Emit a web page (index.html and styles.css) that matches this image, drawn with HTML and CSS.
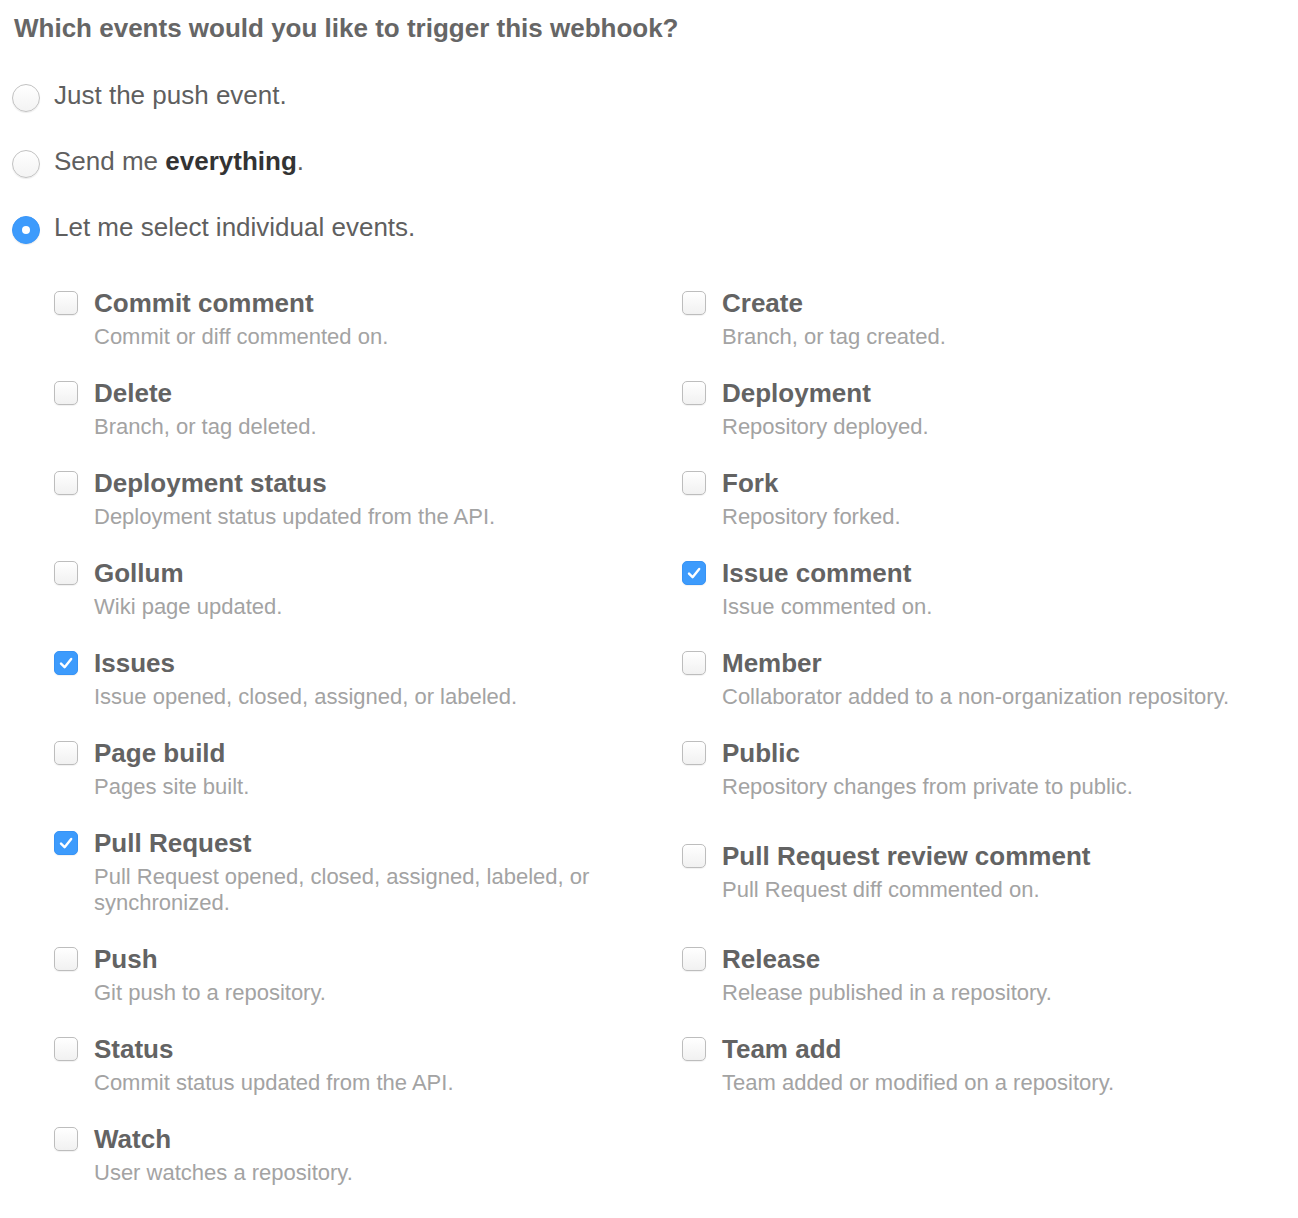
FILE: index.html
```html
<!DOCTYPE html>
<html lang="en">
<head>
<meta charset="utf-8">
<title>Webhook events</title>
<link rel="stylesheet" href="styles.css">
</head>
<body>
<form class="page">
  <h2 class="heading">Which events would you like to trigger this webhook?</h2>

  <div class="radio-list">
    <label class="radio-row"><span class="radio"></span><span class="radio-label">Just the push event.</span></label>
    <label class="radio-row"><span class="radio"></span><span class="radio-label">Send me <strong>everything</strong>.</span></label>
    <label class="radio-row"><span class="radio radio-on"><span class="radio-dot"></span></span><span class="radio-label">Let me select individual events.</span></label>
  </div>

  <div class="events">
    <label class="event"><span class="checkbox"></span><span class="event-text"><span class="event-title">Commit comment</span><span class="event-desc">Commit or diff commented on.</span></span></label>
    <label class="event"><span class="checkbox"></span><span class="event-text"><span class="event-title">Create</span><span class="event-desc">Branch, or tag created.</span></span></label>

    <label class="event"><span class="checkbox"></span><span class="event-text"><span class="event-title">Delete</span><span class="event-desc">Branch, or tag deleted.</span></span></label>
    <label class="event"><span class="checkbox"></span><span class="event-text"><span class="event-title">Deployment</span><span class="event-desc">Repository deployed.</span></span></label>

    <label class="event"><span class="checkbox"></span><span class="event-text"><span class="event-title">Deployment status</span><span class="event-desc">Deployment status updated from the API.</span></span></label>
    <label class="event"><span class="checkbox"></span><span class="event-text"><span class="event-title">Fork</span><span class="event-desc">Repository forked.</span></span></label>

    <label class="event"><span class="checkbox"></span><span class="event-text"><span class="event-title">Gollum</span><span class="event-desc">Wiki page updated.</span></span></label>
    <label class="event"><span class="checkbox checked"><svg viewBox="0 0 24 24" width="24" height="24"><path d="M7 12.6 L10.6 16.2 L17.2 8" /></svg></span><span class="event-text"><span class="event-title">Issue comment</span><span class="event-desc">Issue commented on.</span></span></label>

    <label class="event"><span class="checkbox checked"><svg viewBox="0 0 24 24" width="24" height="24"><path d="M7 12.6 L10.6 16.2 L17.2 8" /></svg></span><span class="event-text"><span class="event-title">Issues</span><span class="event-desc">Issue opened, closed, assigned, or labeled.</span></span></label>
    <label class="event"><span class="checkbox"></span><span class="event-text"><span class="event-title">Member</span><span class="event-desc">Collaborator added to a non-organization repository.</span></span></label>

    <label class="event"><span class="checkbox"></span><span class="event-text"><span class="event-title">Page build</span><span class="event-desc">Pages site built.</span></span></label>
    <label class="event"><span class="checkbox"></span><span class="event-text"><span class="event-title">Public</span><span class="event-desc">Repository changes from private to public.</span></span></label>

    <label class="event"><span class="checkbox checked"><svg viewBox="0 0 24 24" width="24" height="24"><path d="M7 12.6 L10.6 16.2 L17.2 8" /></svg></span><span class="event-text"><span class="event-title">Pull Request</span><span class="event-desc">Pull Request opened, closed, assigned, labeled, or synchronized.</span></span></label>
    <label class="event"><span class="checkbox"></span><span class="event-text"><span class="event-title">Pull Request review comment</span><span class="event-desc">Pull Request diff commented on.</span></span></label>

    <label class="event"><span class="checkbox"></span><span class="event-text"><span class="event-title">Push</span><span class="event-desc">Git push to a repository.</span></span></label>
    <label class="event"><span class="checkbox"></span><span class="event-text"><span class="event-title">Release</span><span class="event-desc">Release published in a repository.</span></span></label>

    <label class="event"><span class="checkbox"></span><span class="event-text"><span class="event-title">Status</span><span class="event-desc">Commit status updated from the API.</span></span></label>
    <label class="event"><span class="checkbox"></span><span class="event-text"><span class="event-title">Team add</span><span class="event-desc">Team added or modified on a repository.</span></span></label>

    <label class="event"><span class="checkbox"></span><span class="event-text"><span class="event-title">Watch</span><span class="event-desc">User watches a repository.</span></span></label>
  </div>
</form>
</body>
</html>
```

FILE: styles.css
```css
html, body {
  margin: 0;
  padding: 0;
  background: #ffffff;
}

body {
  font-family: "Liberation Sans", Arial, Helvetica, sans-serif;
  color: #666666;
}

.page {
  padding: 12px 12px 0 12px;
}

.heading {
  margin: 0 0 0 2px;
  font-size: 26px;
  line-height: 32px;
  font-weight: bold;
  color: #666666;
}

.radio-list {
  display: flex;
  flex-direction: column;
  gap: 34px;
  margin-top: 35px;
}

.radio-row {
  display: flex;
  align-items: center;
  gap: 14px;
  height: 32px;
}

.radio {
  box-sizing: border-box;
  width: 28px;
  height: 28px;
  border-radius: 50%;
  border: 1px solid #c2c2c2;
  background: linear-gradient(#ffffff, #f3f3f3);
  box-shadow: 0 1px 1px rgba(0, 0, 0, 0.08);
  display: flex;
  align-items: center;
  justify-content: center;
  flex: none;
  margin-top: 5px;
}

.radio-on {
  border-color: #3a97f9;
  background: #3d9bfc;
}

.radio-dot {
  width: 8px;
  height: 8px;
  border-radius: 50%;
  background: #ffffff;
}

.radio-label {
  font-size: 26px;
  line-height: 32px;
  color: #5f5f5f;
}

.radio-label strong {
  color: #333333;
  font-weight: bold;
}

.events {
  display: grid;
  grid-template-columns: 628px 628px;
  row-gap: 25px;
  align-items: center;
  margin: 42px 0 0 42px;
}

.event {
  display: flex;
  align-items: flex-start;
  gap: 16px;
}

.checkbox {
  box-sizing: border-box;
  flex: none;
  width: 24px;
  height: 24px;
  margin-top: 6px;
  border-radius: 5px;
  border: 1px solid #bdbdbd;
  background: linear-gradient(#ffffff, #f1f1f1);
  box-shadow: 0 1px 1px rgba(0, 0, 0, 0.06);
  display: flex;
  align-items: center;
  justify-content: center;
}

.checkbox.checked {
  border-color: #3793f5;
  background: #3d9bfc;
}

.checkbox svg {
  display: block;
  margin: -1px;
  fill: none;
  stroke: #ffffff;
  stroke-width: 2.4;
  stroke-linecap: round;
  stroke-linejoin: round;
}

.event-text {
  display: flex;
  flex-direction: column;
  padding-right: 20px;
}

.event-title {
  font-size: 26px;
  line-height: 36px;
  font-weight: bold;
  color: #636363;
}

.event-desc {
  margin-top: 3px;
  font-size: 22px;
  line-height: 26px;
  color: #a3a3a3;
}
```
